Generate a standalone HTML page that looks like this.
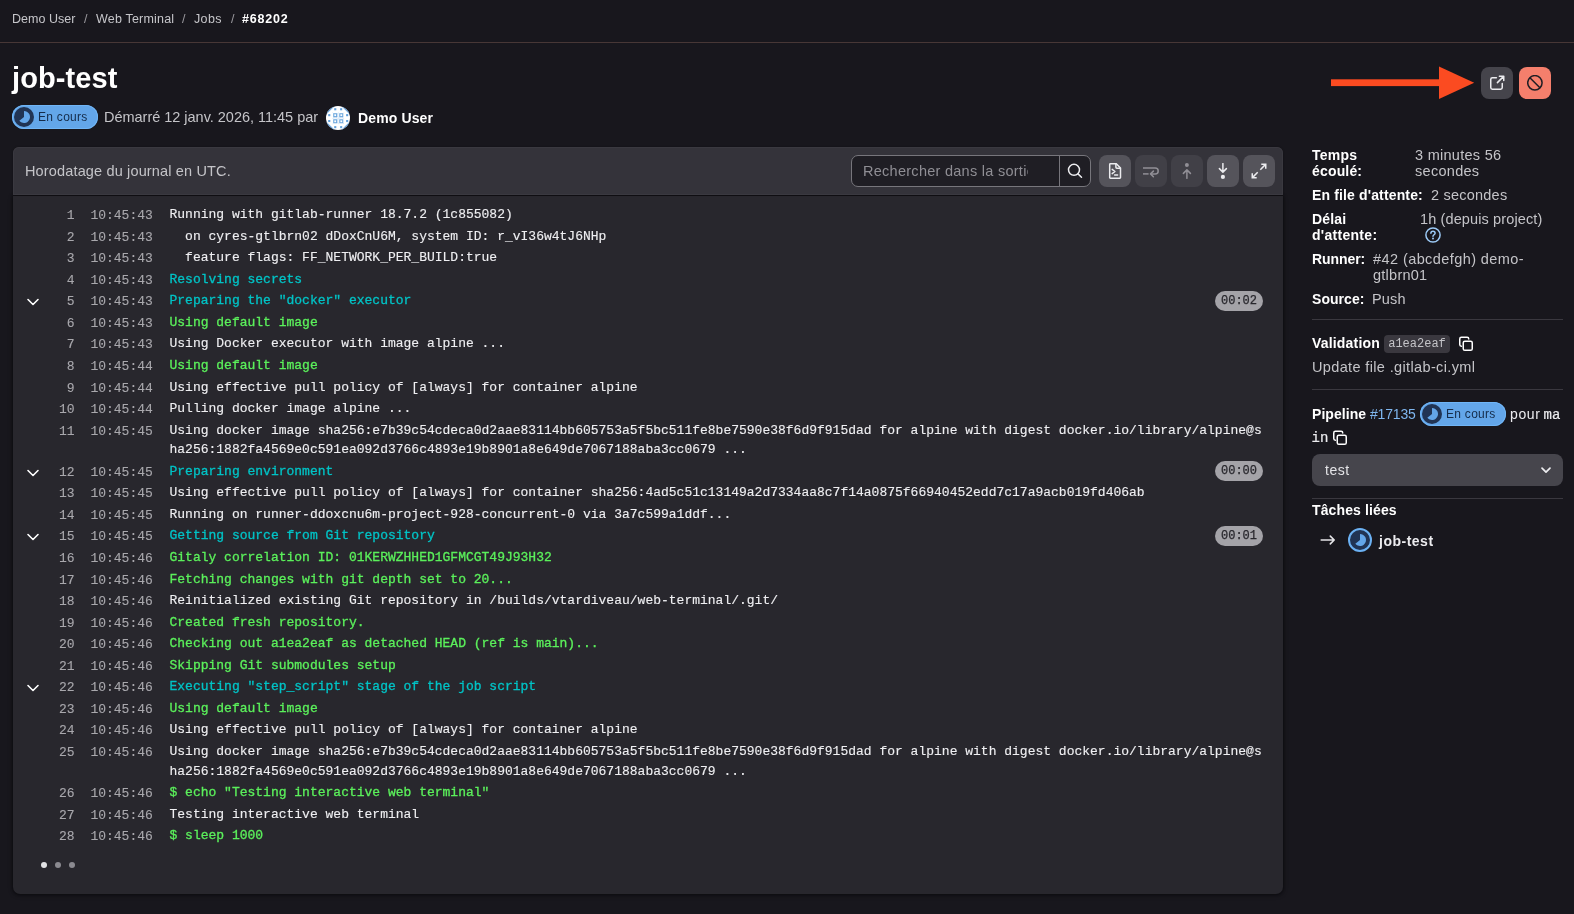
<!DOCTYPE html>
<html lang="fr">
<head>
<meta charset="utf-8">
<title>job-test</title>
<style>
*{box-sizing:border-box;margin:0;padding:0}
html,body{width:1574px;height:914px;overflow:hidden;background:#18171d}
body{font-family:"Liberation Sans",sans-serif;color:#ececef;position:relative;font-size:14px;will-change:transform}
.abs{position:absolute;white-space:nowrap}
svg{display:block}

/* breadcrumb */
.crumbs{position:absolute;left:0;top:0;width:1574px;height:43px;border-bottom:1px solid #473736}
.crumbs span{position:absolute;top:12px;font-size:12.5px;line-height:15px;color:#c6c6ca;white-space:nowrap}
.crumbs span.sep{color:#9a999e}
.crumbs span.cur{color:#fff;font-weight:bold}

/* title */
#title{left:12px;top:60px;font-size:29px;line-height:36px;font-weight:bold;color:#fff;letter-spacing:-0.2px}

/* badge */
.badge{position:absolute;height:24px;width:86px;border-radius:12px;background:#63a6e9;box-shadow:inset 0 0 0 1px #70b5f6;color:#152c4a;font-size:12px;line-height:24px}
.badge svg{position:absolute;left:2px;top:2px}
.badge b{position:absolute;left:26px;top:0;font-weight:normal;white-space:nowrap;letter-spacing:.28px}

#started{left:104px;top:108px;font-size:14.5px;line-height:18px;color:#c4c4c8}
#author{left:358px;top:109px;font-size:14px;line-height:18px;font-weight:bold;color:#fff}

/* top right buttons */
.btn32{position:absolute;width:32px;height:32px;border-radius:8px}

/* log panel */
#panel{position:absolute;left:13px;top:147px;width:1270px;height:747px}
#pbody{position:absolute;left:0;top:49px;width:1270px;height:698px;background:#28272d;border-radius:0 0 7px 7px;box-shadow:0 0 3px rgba(5,5,6,.6),0 1px 5px rgba(5,5,6,.45)}
#phead{position:absolute;left:0;top:0;width:1270px;height:48px;background:#34333a;border-radius:6px 6px 0 0;box-shadow:inset 0 0 0 1px #3a3940,0 0 2px rgba(5,5,6,.35)}
#phead .t{position:absolute;left:12px;top:15px;font-size:14.5px;line-height:18px;color:#c4c4c8;white-space:nowrap}
#search{position:absolute;left:838px;top:8px;width:240px;height:32px;border:1px solid #77767c;border-radius:7px;background:#1f1e24;overflow:hidden}
#search .ph{position:absolute;left:11px;top:6px;width:164.8px;overflow:hidden;white-space:nowrap;font-size:14.5px;line-height:18px;color:#8f8e94;letter-spacing:.27px}
#search .sb{position:absolute;left:207px;top:0;width:32px;height:30px;border-left:1px solid #77767c}
.tb{position:absolute;top:8px;width:32px;height:32px;border-radius:8px;background:#55545b}
.tb.dis{background:#414047}

/* log */
#log{position:absolute;left:0;top:58px;width:1270px;font-family:"Liberation Mono",monospace;font-size:13px;line-height:19.5px;color:#efeff2;-webkit-text-stroke:.12px #efeff2}
.ln{position:relative;padding:1.035px 0;min-height:21.57px}
.ln .n{position:absolute;left:0;top:1px;width:61.5px;text-align:right;color:#a9a8ad;-webkit-text-stroke:.1px #a9a8ad}
.ln .ts{position:absolute;left:77.4px;top:1px;color:#a9a8ad;-webkit-text-stroke:.1px #a9a8ad}
.ln .m{display:block;margin-left:156.5px;white-space:pre;position:relative;top:-1px}
.ln .chev{position:absolute;left:12px;top:3px}
.ln .dur{position:absolute;left:1202px;top:-.5px;width:48px;height:20px;border-radius:10px;background:#a4a3a8;color:#28272d;font-size:12px;line-height:20px;text-align:center;-webkit-text-stroke:.25px #28272d}
.c{color:#00c3c6;-webkit-text-stroke:.3px #00c3c6}
.g{color:#5bf05b;-webkit-text-stroke:.3px #5bf05b}
.dots i{position:absolute;width:6px;height:6px;border-radius:50%;background:#8b8a90;top:715px}

/* sidebar */
.sb-l{font-weight:bold;color:#fff;font-size:14px;line-height:16px}
.sb-v{color:#c4c4c8;font-size:14.5px;line-height:16px}
.hr{position:absolute;left:1312px;width:251px;height:1px;background:#3a383f}
.mono{font-family:"Liberation Mono",monospace}
#bc1{letter-spacing:0.04px}
#bc2{letter-spacing:0.19px}
#bc3{letter-spacing:0.37px}
#bc4{letter-spacing:0.81px}
#title{letter-spacing:0.11px}
#badge1t{letter-spacing:0.28px}
#started{letter-spacing:-0.02px}
#author{letter-spacing:0.13px}
#ptitle{letter-spacing:0.15px}
#s_temps{letter-spacing:0.26px}
#s_ecoule{letter-spacing:0.17px}
#s_3min{letter-spacing:0.28px}
#s_sec{letter-spacing:0.29px}
#s_file{letter-spacing:0.14px}
#s_2sec{letter-spacing:0.22px}
#s_delai{letter-spacing:0.19px}
#s_datt{letter-spacing:0.29px}
#s_1h{letter-spacing:0.12px}
#s_runner{letter-spacing:-0.08px}
#s_42{letter-spacing:0.42px}
#s_gtl{letter-spacing:0.25px}
#s_source{letter-spacing:0.04px}
#s_push{letter-spacing:0.16px}
#s_valid{letter-spacing:0.18px}
#s_update{letter-spacing:0.36px}
#s_pipe{letter-spacing:0.06px}
#s_pid{letter-spacing:-0.19px}
#s_pour{letter-spacing:0.64px}
#s_test{letter-spacing:0.53px}
#s_taches{letter-spacing:0.12px}
#s_job{letter-spacing:0.5px}
</style>
</head>
<body>

<div class="crumbs">
  <span id="bc1" style="left:12px">Demo User</span>
  <span class="sep" style="left:84px">/</span>
  <span id="bc2" style="left:96px">Web Terminal</span>
  <span class="sep" style="left:182px">/</span>
  <span id="bc3" style="left:194px">Jobs</span>
  <span class="sep" style="left:231px">/</span>
  <span id="bc4" class="cur" style="left:242px">#68202</span>
</div>

<div id="title" class="abs">job-test</div>

<div class="badge" id="badge1" style="left:12px;top:105px">
  <svg width="20" height="20" viewBox="0 0 20 20"><circle cx="10" cy="10" r="10" fill="#213454"/><path d="M10 10V4a6 6 0 1 1-4.68 9.75z" fill="#63a6e9"/></svg>
  <b id="badge1t">En cours</b>
</div>
<div id="started" class="abs">Démarré 12 janv. 2026, 11:45 par</div>
<svg id="avatar" class="abs" style="left:326px;top:106px" width="24" height="24" viewBox="0 0 24 24">
  <defs><clipPath id="avc"><circle cx="12" cy="12" r="12"/></clipPath></defs>
  <circle cx="12" cy="12" r="12" fill="#fff"/>
  <g clip-path="url(#avc)" fill="#62a0da">
    <rect x="8.2" y="2.2" width="2.1" height="2.1"/><rect x="14.1" y="2.2" width="2.1" height="2.1"/>
    <rect x="8.2" y="20.1" width="2.1" height="2.1"/><rect x="14.1" y="20.1" width="2.1" height="2.1"/>
    <rect x="2.2" y="8.1" width="2.1" height="2.1"/><rect x="2.2" y="14" width="2.1" height="2.1"/>
    <rect x="20.1" y="8.1" width="2.1" height="2.1"/><rect x="20.1" y="14" width="2.1" height="2.1"/>
    <path d="M0 0H8.8L0 8.8Z M24 0H15.2L24 8.8Z M0 24H8.8L0 15.2Z M24 24H15.2L24 15.2Z" opacity=".9"/>
  </g>
  <g fill="none" stroke="#62a0da" stroke-width="1.05" opacity=".95">
    <rect x="7.75" y="7.75" width="2.9" height="2.9"/><rect x="13.85" y="7.75" width="2.9" height="2.9"/>
    <rect x="7.75" y="13.85" width="2.9" height="2.9"/><rect x="13.85" y="13.85" width="2.9" height="2.9"/>
  </g>
  <g fill="none" stroke="#6aa3dc" stroke-width=".45" opacity=".55">
    <path d="M6.6 6.6 L7.5 7.5 M17.9 6.6 L17 7.5 M6.6 17.9 L7.5 17 M17.9 17.9 L17 17"/>
    <ellipse cx="12.25" cy="9.2" rx=".9" ry="2.4"/><ellipse cx="12.25" cy="15.3" rx=".9" ry="2.4"/>
    <ellipse cx="9.2" cy="12.25" rx="2.4" ry=".9"/><ellipse cx="15.3" cy="12.25" rx="2.4" ry=".9"/>
  </g>
</svg>
<div id="author" class="abs">Demo User</div>

<!-- arrow + buttons -->
<svg class="abs" style="left:1325px;top:60px" width="160" height="46" viewBox="0 0 160 46">
  <rect x="6" y="19.3" width="110" height="6.8" fill="#fb4b21"/>
  <path d="M114 6.6 L149.2 22.8 L114 39 Z" fill="#fb4b21"/>
</svg>
<div class="btn32" id="btnext" style="left:1481px;top:67px;background:#45444b"><svg style="margin:8px" width="16" height="16" viewBox="0 0 16 16" fill="none" stroke="#ececef" stroke-width="1.5" stroke-linecap="round" stroke-linejoin="round"><path d="M7.4 2.75H3.4c-.9 0-1.65.75-1.65 1.65v8.2c0 .9.75 1.65 1.65 1.65h8.2c.9 0 1.65-.75 1.65-1.65V8.4"/><path d="M8.4 7.6 L14.6 1.4 M10.4 1.25 H14.75 V5.6"/></svg></div>
<div class="btn32" id="btncancel" style="left:1519px;top:67px;background:#f57f6c"><svg style="margin:8px" width="16" height="16" viewBox="0 0 16 16" fill="none" stroke="#1f1e24" stroke-width="1.5"><circle cx="7.9" cy="7.8" r="7.2"/><path d="M2.9 2.8 L12.9 12.8"/></svg></div>

<div id="panel">
  <div id="pbody"></div>
  <div id="phead">
    <div class="t" id="ptitle">Horodatage du journal en UTC.</div>
    <div id="search"><div class="ph">Rechercher dans la sortie</div><div class="sb"><svg style="margin:7px 0 0 7px" width="16" height="16" viewBox="0 0 16 16" fill="none" stroke="#ececef" stroke-width="1.5" stroke-linecap="round"><circle cx="7" cy="6.8" r="5.5"/><path d="M11 10.9 L14.5 14.3"/></svg></div></div>
    <div class="tb" style="left:1086px"><svg style="margin:8px" width="16" height="16" viewBox="0 0 16 16" fill="none" stroke="#ececef" stroke-width="1.5" stroke-linejoin="round" stroke-linecap="round"><path d="M3.4 .75h5.9l4.2 4.2v9.6c0 .4-.3.7-.7.7H3.4c-.4 0-.7-.3-.7-.7V1.45c0-.4.3-.7.7-.7z"/><path d="M8.9 1v3.3c0 .5.4.9.9.9h3.3"/><path d="M5.2 6.4 L7.9 8.5 L5.2 10.6 M7.6 12.1 H10.6"/></svg></div>
    <div class="tb dis" style="left:1122px"><svg style="margin:8px" width="16" height="16" viewBox="0 0 16 16" fill="none" stroke="#918f96" stroke-width="1.5" stroke-linejoin="round"><path d="M0 4.9 H12.2 a3 3 0 0 1 0 6 H8"/><path d="M0 10.9 H5.6"/><path d="M10.4 8.1 L7.5 10.9 L10.4 13.7" stroke-linecap="round"/></svg></div>
    <div class="tb dis" style="left:1158px"><svg style="margin:8px" width="16" height="16" viewBox="0 0 16 16" fill="none" stroke="#918f96" stroke-width="1.5" stroke-linejoin="round" stroke-linecap="round"><circle cx="7.9" cy="2" r="2" fill="#918f96" stroke="none"/><path d="M7.9 15.3 V7 M4.4 10.4 L7.9 6.9 L11.4 10.4"/></svg></div>
    <div class="tb" style="left:1194px"><svg style="margin:8px" width="16" height="16" viewBox="0 0 16 16" fill="none" stroke="#ececef" stroke-width="1.5" stroke-linejoin="round" stroke-linecap="round"><circle cx="7.9" cy="13.9" r="2.1" fill="#ececef" stroke="none"/><path d="M7.9 .6 V9 M4.4 5.6 L7.9 9.1 L11.4 5.6"/></svg></div>
    <div class="tb" style="left:1230px"><svg style="margin:8px" width="16" height="16" viewBox="0 0 16 16" fill="none" stroke="#ececef" stroke-width="1.5" stroke-linejoin="miter" stroke-linecap="butt"><path d="M9.3 6.7 L14.6 1.4 M10.3 1.25 H14.75 V5.7"/><path d="M6.7 9.3 L1.4 14.6 M1.25 10.3 V14.75 H5.7"/></svg></div>
  </div>
  <div id="log">
<div class="ln" id="l1"><span class="n">1</span><span class="ts">10:45:43</span><span class="m ">Running with gitlab-runner 18.7.2 (1c855082)</span></div>
<div class="ln" id="l2"><span class="n">2</span><span class="ts">10:45:43</span><span class="m ">  on cyres-gtlbrn02 dDoxCnU6M, system ID: r_vI36w4tJ6NHp</span></div>
<div class="ln" id="l3"><span class="n">3</span><span class="ts">10:45:43</span><span class="m ">  feature flags: FF_NETWORK_PER_BUILD:true</span></div>
<div class="ln" id="l4"><span class="n">4</span><span class="ts">10:45:43</span><span class="m c">Resolving secrets</span></div>
<div class="ln" id="l5"><svg class="chev" width="16" height="16" viewBox="0 0 16 16"><path d="M3 5.5 L8 10.5 L13 5.5" fill="none" stroke="#fff" stroke-width="1.6" stroke-linecap="round" stroke-linejoin="round"/></svg><span class="n">5</span><span class="ts">10:45:43</span><span class="m c">Preparing the "docker" executor</span><span class="dur">00:02</span></div>
<div class="ln" id="l6"><span class="n">6</span><span class="ts">10:45:43</span><span class="m g">Using default image</span></div>
<div class="ln" id="l7"><span class="n">7</span><span class="ts">10:45:43</span><span class="m ">Using Docker executor with image alpine ...</span></div>
<div class="ln" id="l8"><span class="n">8</span><span class="ts">10:45:44</span><span class="m g">Using default image</span></div>
<div class="ln" id="l9"><span class="n">9</span><span class="ts">10:45:44</span><span class="m ">Using effective pull policy of [always] for container alpine</span></div>
<div class="ln" id="l10"><span class="n">10</span><span class="ts">10:45:44</span><span class="m ">Pulling docker image alpine ...</span></div>
<div class="ln" id="l11"><span class="n">11</span><span class="ts">10:45:45</span><span class="m ">Using docker image sha256:e7b39c54cdeca0d2aae83114bb605753a5f5bc511fe8be7590e38f6d9f915dad for alpine with digest docker.io/library/alpine@s
ha256:1882fa4569e0c591ea092d3766c4893e19b8901a8e649de7067188aba3cc0679 ...</span></div>
<div class="ln" id="l12"><svg class="chev" width="16" height="16" viewBox="0 0 16 16"><path d="M3 5.5 L8 10.5 L13 5.5" fill="none" stroke="#fff" stroke-width="1.6" stroke-linecap="round" stroke-linejoin="round"/></svg><span class="n">12</span><span class="ts">10:45:45</span><span class="m c">Preparing environment</span><span class="dur">00:00</span></div>
<div class="ln" id="l13"><span class="n">13</span><span class="ts">10:45:45</span><span class="m ">Using effective pull policy of [always] for container sha256:4ad5c51c13149a2d7334aa8c7f14a0875f66940452edd7c17a9acb019fd406ab</span></div>
<div class="ln" id="l14"><span class="n">14</span><span class="ts">10:45:45</span><span class="m ">Running on runner-ddoxcnu6m-project-928-concurrent-0 via 3a7c599a1ddf...</span></div>
<div class="ln" id="l15"><svg class="chev" width="16" height="16" viewBox="0 0 16 16"><path d="M3 5.5 L8 10.5 L13 5.5" fill="none" stroke="#fff" stroke-width="1.6" stroke-linecap="round" stroke-linejoin="round"/></svg><span class="n">15</span><span class="ts">10:45:45</span><span class="m c">Getting source from Git repository</span><span class="dur">00:01</span></div>
<div class="ln" id="l16"><span class="n">16</span><span class="ts">10:45:46</span><span class="m g">Gitaly correlation ID: 01KERWZHHED1GFMCGT49J93H32</span></div>
<div class="ln" id="l17"><span class="n">17</span><span class="ts">10:45:46</span><span class="m g">Fetching changes with git depth set to 20...</span></div>
<div class="ln" id="l18"><span class="n">18</span><span class="ts">10:45:46</span><span class="m ">Reinitialized existing Git repository in /builds/vtardiveau/web-terminal/.git/</span></div>
<div class="ln" id="l19"><span class="n">19</span><span class="ts">10:45:46</span><span class="m g">Created fresh repository.</span></div>
<div class="ln" id="l20"><span class="n">20</span><span class="ts">10:45:46</span><span class="m g">Checking out a1ea2eaf as detached HEAD (ref is main)...</span></div>
<div class="ln" id="l21"><span class="n">21</span><span class="ts">10:45:46</span><span class="m g">Skipping Git submodules setup</span></div>
<div class="ln" id="l22"><svg class="chev" width="16" height="16" viewBox="0 0 16 16"><path d="M3 5.5 L8 10.5 L13 5.5" fill="none" stroke="#fff" stroke-width="1.6" stroke-linecap="round" stroke-linejoin="round"/></svg><span class="n">22</span><span class="ts">10:45:46</span><span class="m c">Executing "step_script" stage of the job script</span></div>
<div class="ln" id="l23"><span class="n">23</span><span class="ts">10:45:46</span><span class="m g">Using default image</span></div>
<div class="ln" id="l24"><span class="n">24</span><span class="ts">10:45:46</span><span class="m ">Using effective pull policy of [always] for container alpine</span></div>
<div class="ln" id="l25"><span class="n">25</span><span class="ts">10:45:46</span><span class="m ">Using docker image sha256:e7b39c54cdeca0d2aae83114bb605753a5f5bc511fe8be7590e38f6d9f915dad for alpine with digest docker.io/library/alpine@s
ha256:1882fa4569e0c591ea092d3766c4893e19b8901a8e649de7067188aba3cc0679 ...</span></div>
<div class="ln" id="l26"><span class="n">26</span><span class="ts">10:45:46</span><span class="m g">$ echo "Testing interactive web terminal"</span></div>
<div class="ln" id="l27"><span class="n">27</span><span class="ts">10:45:46</span><span class="m ">Testing interactive web terminal</span></div>
<div class="ln" id="l28"><span class="n">28</span><span class="ts">10:45:46</span><span class="m g">$ sleep 1000</span></div>
  </div>
  <div class="dots"><i style="left:28px;background:#e2e2e4"></i><i style="left:42px"></i><i style="left:56px"></i></div>
</div>

<!-- sidebar -->
<div class="abs sb-l" id="s_temps" style="left:1312px;top:147px">Temps</div>
<div class="abs sb-l" id="s_ecoule" style="left:1312px;top:163px">écoulé:</div>
<div class="abs sb-v" id="s_3min" style="left:1415px;top:147px">3 minutes 56</div>
<div class="abs sb-v" id="s_sec" style="left:1415px;top:163px">secondes</div>

<div class="abs sb-l" id="s_file" style="left:1312px;top:187px">En file d'attente:</div>
<div class="abs sb-v" id="s_2sec" style="left:1431px;top:187px">2 secondes</div>

<div class="abs sb-l" id="s_delai" style="left:1312px;top:211px">Délai</div>
<div class="abs sb-l" id="s_datt" style="left:1312px;top:227px">d'attente:</div>
<div class="abs sb-v" id="s_1h" style="left:1420px;top:211px">1h (depuis project)</div>
<svg class="abs" style="left:1425px;top:227px" width="16" height="16" viewBox="0 0 16 16"><circle cx="8" cy="8" r="7.1" fill="none" stroke="#9ccaf6" stroke-width="1.5"/><path d="M5.9 6.3c0-1.2.9-2 2.1-2s2.1.8 2.1 1.9c0 1.5-2.1 1.6-2.1 3.1" fill="none" stroke="#9ccaf6" stroke-width="1.5" stroke-linecap="round"/><circle cx="8" cy="11.5" r="1" fill="#9ccaf6"/></svg>

<div class="abs sb-l" id="s_runner" style="left:1312px;top:251px">Runner:</div>
<div class="abs sb-v" id="s_42" style="left:1373px;top:251px">#42 (abcdefgh) demo-</div>
<div class="abs sb-v" id="s_gtl" style="left:1373px;top:267px">gtlbrn01</div>

<div class="abs sb-l" id="s_source" style="left:1312px;top:291px">Source:</div>
<div class="abs sb-v" id="s_push" style="left:1372px;top:291px">Push</div>

<div class="hr" style="top:319px"></div>

<div class="abs sb-l" id="s_valid" style="left:1312px;top:335px">Validation</div>
<div class="abs mono" id="s_sha" style="left:1384px;top:335px;width:66px;height:18px;border-radius:4px;background:#3a383f;color:#c4c4c8;font-size:12px;line-height:18px;text-align:center">a1ea2eaf</div>
<svg class="abs" style="left:1458px;top:336px" width="16" height="16" viewBox="0 0 16 16" fill="none" stroke="#fff" stroke-width="1.5" stroke-linejoin="round"><path d="M5 4.6V3.2c0-.9.7-1.6 1.6-1.6h0M10.6 10.4h-6c-.9 0-1.6-.7-1.6-1.6" stroke="none"/><rect x="5.25" y="5.25" width="9" height="9" rx="1.6"/><path d="M10.75 2.9c0-.9-.7-1.65-1.6-1.65H3.4c-.9 0-1.65.75-1.65 1.65v5.7c0 .9.75 1.65 1.65 1.65" stroke-linecap="round"/></svg>
<div class="abs sb-v" id="s_update" style="left:1312px;top:359px">Update file .gitlab-ci.yml</div>

<div class="hr" style="top:389px"></div>

<div class="abs sb-l" id="s_pipe" style="left:1312px;top:405.5px">Pipeline</div>
<div class="abs" id="s_pid" style="left:1370px;top:405.5px;font-size:14px;line-height:16px;color:#7fb6ee">#17135</div>
<div class="badge" id="badge2" style="left:1420px;top:402px">
  <svg width="20" height="20" viewBox="0 0 20 20"><circle cx="10" cy="10" r="10" fill="#213454"/><path d="M10 10V4a6 6 0 1 1-4.68 9.75z" fill="#63a6e9"/></svg>
  <b>En cours</b>
</div>
<div class="abs" id="s_pour" style="left:1510px;top:405.5px;font-size:14px;line-height:16px;color:#ececef">pour</div>
<div class="abs mono" id="s_ma" style="left:1543.5px;top:407px;font-size:14px;line-height:16px;color:#ececef;-webkit-text-stroke:.2px #ececef">ma</div>
<div class="abs mono" id="s_in" style="left:1311.5px;top:430px;font-size:14px;line-height:16px;color:#ececef;-webkit-text-stroke:.2px #ececef">in</div>
<svg class="abs" style="left:1332px;top:430px" width="16" height="16" viewBox="0 0 16 16" fill="none" stroke="#fff" stroke-width="1.5" stroke-linejoin="round"><rect x="5.25" y="5.25" width="9" height="9" rx="1.6"/><path d="M10.75 2.9c0-.9-.7-1.65-1.6-1.65H3.4c-.9 0-1.65.75-1.65 1.65v5.7c0 .9.75 1.65 1.65 1.65" stroke-linecap="round"/></svg>

<div class="abs" id="dd" style="left:1312px;top:454px;width:251px;height:32px;border-radius:8px;background:#46454c"></div>
<div class="abs" id="s_test" style="left:1325px;top:462px;font-size:14px;line-height:16px;color:#e4e4e7">test</div>
<svg class="abs" style="left:1538px;top:462px" width="16" height="16" viewBox="0 0 16 16"><path d="M4 6.2 L8 10.2 L12 6.2" fill="none" stroke="#ececef" stroke-width="1.7" stroke-linecap="round" stroke-linejoin="round"/></svg>

<div class="hr" style="top:498px"></div>

<div class="abs sb-l" id="s_taches" style="left:1312px;top:502px">Tâches liées</div>
<svg class="abs" style="left:1320px;top:532px" width="16" height="16" viewBox="0 0 16 16"><path d="M1.2 8 H14.2 M10.3 4.1 L14.2 8 L10.3 11.9" fill="none" stroke="#e4e4e7" stroke-width="1.6" stroke-linecap="round" stroke-linejoin="round"/></svg>
<svg class="abs" style="left:1348px;top:528px" width="24" height="24" viewBox="0 0 24 24"><circle cx="12" cy="12" r="11" fill="#213454" stroke="#6bb1f3" stroke-width="2"/><path d="M12 12V6a6 6 0 1 1-4.68 9.75z" fill="#63a6e9"/></svg>
<div class="abs" id="s_job" style="left:1379px;top:533px;font-size:14px;line-height:16px;font-weight:bold;color:#ececef">job-test</div>

</body>
</html>
